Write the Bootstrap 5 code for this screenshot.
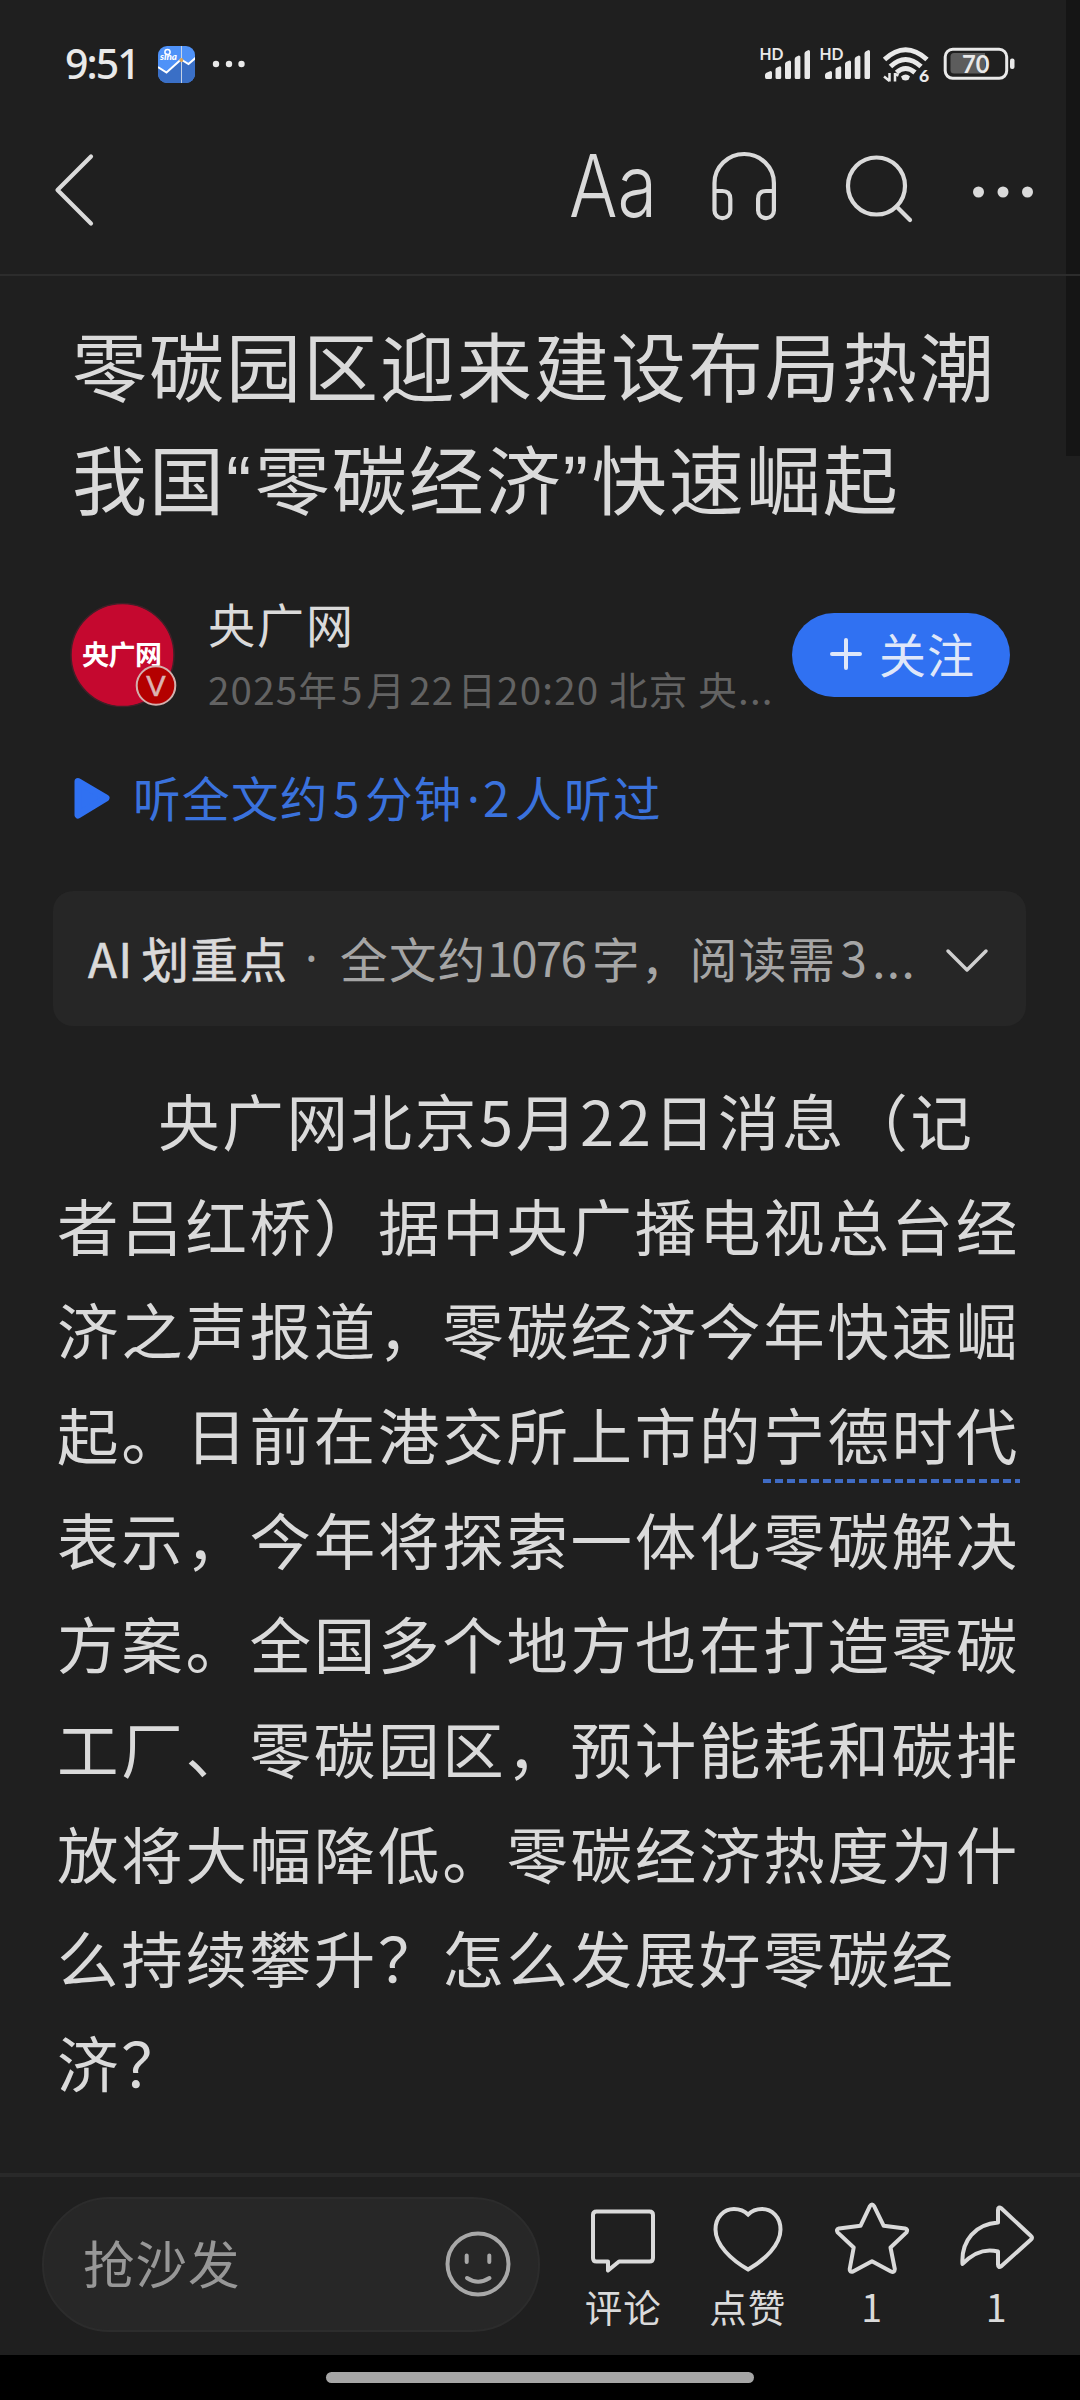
<!DOCTYPE html>
<html lang="zh-CN">
<head>
<meta charset="utf-8">
<meta name="viewport" content="width=device-width, initial-scale=1">
<title>零碳园区迎来建设布局热潮</title>
<link href="https://cdn.jsdelivr.net/npm/bootstrap@5.3.0/dist/css/bootstrap.min.css" rel="stylesheet">
<style>
  html, body { height: 2400px; overflow: hidden; }
  body { background: #1f1f1f; color: #dadada; font-family: "Noto Sans CJK SC", sans-serif; width: 1080px; line-height: 1; }
  svg { display: block; flex: none; overflow: visible; }
  .screen { height: 2400px; }
  .edge-strip { position: absolute; right: 0; top: 0; width: 14px; height: 456px; background: #151515; }
  .status { height: 128px; padding: 0 65px 0 65px; color: #e9e9e9; }
  .clock { font: 500 41px/41px "Noto Sans", sans-serif; letter-spacing: -1.9px; width: 93px; padding-bottom: 1px; }
  .toolbar { height: 148px; border-bottom: 2px solid #2c2c2c; }
  .headline { margin: 0; padding: 31px 0 0 72px; height: 280px; font-size: 75px; line-height: 113px; font-weight: 400; letter-spacing: 2px; }
  .qt { font-family: "Liberation Sans", sans-serif; font-size: 76px; line-height: 1; letter-spacing: 3.500px; }
  .byline { height: 196px; padding: 1px 70px 0 69px; }
  .who { margin-left: 29px; }
  .source { font-size: 47px; line-height: 54px; letter-spacing: 2px; margin-top: -2px; }
  .meta { font-size: 38.5px; line-height: 46px; color: #636363; letter-spacing: 1.2px; margin-top: 15px; }
  .meta .num { margin: 0 3px; }
  .follow { width: 218px; height: 84px; background: #3071f2; color: #dfe7f9; font-size: 47px; padding: 0 0 2px 37px; letter-spacing: 1px; }
  .listen { height: 92px; padding-left: 72px; color: #3a72dd; font-size: 47.5px; letter-spacing: 1.5px; }
  .num { margin: 0 4px; }
  .mid { font-family: "Noto Sans", sans-serif; line-height: 1; margin: 0 2px; }
  .listen .mid { margin: 0 2px 0 4px; }
  .brief { margin: 47px 54px 0 53px; height: 135px; border-radius: 20px; background: #262626; padding: 0 38px 0 35px; font-size: 47.5px; letter-spacing: 1.4px; }
  .brief .lead-in { -webkit-text-stroke: .6px #dadada; width: 215px; }
  .brief .dotsep { width: 37px; }
  .brief .sum { color: #a5a5a5; }
  .brief span { position: relative; top: -1px; }
  .tight { letter-spacing: -1.8px; margin-right: 7px; }
  .story { padding: 42px 0 0 57px; height: 1147px; font-size: 61.5px; line-height: 104.67px; letter-spacing: 2.7px; white-space: nowrap; margin: 0; }
  .indent { padding-left: 101px; }
  .term { color: inherit; text-decoration: none; padding-bottom: 5px; background: repeating-linear-gradient(90deg, #3f6bc4 0 8px, transparent 8px 12px) 0 100% / 100% 4px no-repeat; }
  .dock { height: 182px; border-top: 4px solid #292929; padding: 0 21px 4px 42px; }
  .reply { width: 498px; height: 135px; border: 2px solid #2c2c2c; background: #272727; color: #979797; font-size: 51.5px; letter-spacing: 1px; padding: 0 27px 0 39px; }
  .reply span { padding-bottom: 5px; }
  .acts { margin-left: 21px; padding-top: 1px; }
  .act { width: 124.5px; font-size: 37.5px; letter-spacing: 1px; }
  .act span { line-height: 40px; margin-top: 7px; }
  .gesture { height: 45px; background: #000; padding-top: 17px; }
  .gesture div { width: 428px; height: 11px; background: #a6a6a6; }
</style>
</head>
<body>
<div class="screen d-flex flex-column position-relative">
  <div class="edge-strip"></div>

  <header class="status d-flex align-items-center position-relative">
    <span class="clock">9:51</span>
    <svg width="90" height="40" viewBox="0 0 90 40">
      <defs><clipPath id="app"><rect y="2" width="37" height="37" rx="9"/></clipPath></defs>
      <g clip-path="url(#app)">
        <rect y="2" width="37" height="37" fill="#4f92f8"/>
        <path d="M0 23l8.500 5.500L23 15l7.500 5L37 14v26H0z" fill="#3a6fc6"/>
        <path d="M0 23l8.500 5.500L23 15.500l7.500 4.500L38 13.500" fill="none" stroke="#fff" stroke-width="2"/>
        <path d="M23.500 2v37" stroke="#d5dce8" stroke-width=".9"/>
        <circle cx="23.300" cy="16" r="2" fill="#dfa552"/>
      </g>
      <circle cx="9.500" cy="8" r="2.600" fill="none" stroke="#fff" stroke-width="1.500"/>
      <text x="2" y="15.500" font-family="Lato" font-size="9" font-weight="900" font-style="italic" fill="#fff" textLength="17" lengthAdjust="spacingAndGlyphs">sina</text>
      <g fill="#e9e9e9"><circle cx="58" cy="20" r="3.200"/><circle cx="71" cy="20" r="3.200"/><circle cx="83.500" cy="20" r="3.200"/></g>
    </svg>
    <svg class="ms-auto" width="256" height="40" viewBox="759 44 256 40">
      <g fill="#e9e9e9">
        <text x="759.500" y="60" font-family="Lato" font-weight="700" font-size="17" textLength="24" lengthAdjust="spacingAndGlyphs">HD</text>
        <text x="819.500" y="60" font-family="Lato" font-weight="700" font-size="17" textLength="24" lengthAdjust="spacingAndGlyphs">HD</text>
        <path id="bars" d="M765 77v-2q0-1.500 1.500-2.200l4-1.800q1.500 0 1.500 1.500v5q0 1.500-1.500 1.500h-4q-1.500 0-1.500-2zM775.500 69.500q0-1.500 1.500-2l3-1.300q1.200 0 1.200 1.500v9.800q0 1.500-1.500 1.500h-2.700q-1.500 0-1.500-1.500zM785 64q0-1.500 1.500-2.200l3-1.300q1.500 0 1.500 1.500v15.500q0 1.500-1.500 1.500h-3q-1.500 0-1.500-1.500zM794.700 59q0-1.500 1.500-2.200l2.700-1.300q1.500 0 1.500 1.500v20.500q0 1.500-1.500 1.500h-2.700q-1.500 0-1.500-1.500zM804.500 53.500q0-1.500 1.500-2.200l2.500-1.300q1.500 0 1.500 1.500v26q0 1.500-1.500 1.500h-2.500q-1.500 0-1.500-1.500z"/>
        <use href="#bars" x="60"/>
        <path d="M901 76.500q5-4 9 0l-1.500 3.200q-3 1.600-6 0z"/>
        <path d="M889.500 73v8.500M895 73v8.500M889.500 81l-5.500-4.500M895 74l3.500 1.500" stroke="#e9e9e9" stroke-width="2.500" fill="none"/>
        <text x="919" y="82" font-family="Lato" font-weight="900" font-size="17.500">6</text>
      </g>
      <g fill="none" stroke="#e9e9e9" stroke-width="5">
        <path d="M884.500 59.500q21-19.500 42.500 0M890.500 66.500q15-14 30.500 0M896.500 72.500q9-8 18.500 0"/>
      </g>
      <rect x="945.200" y="49.300" width="61.500" height="29" rx="7.500" fill="none" stroke="#e9e9e9" stroke-width="3"/>
      <path d="M954 53h31v20.500h-31q-3.500 0-3.500-3.500v-13.500q0-3.500 3.500-3.500z" fill="#5c5c5c"/>
      <rect x="1010" y="58.500" width="4.500" height="10.500" rx="2" fill="#e9e9e9"/>
      <text x="962" y="73" font-family="Lato" font-weight="700" font-size="25" fill="#e9e9e9" textLength="27.500" lengthAdjust="spacingAndGlyphs">70</text>
    </svg>
  </header>

  <nav class="toolbar position-relative">
    <svg width="1080" height="146" viewBox="0 128 1080 146" fill="none" stroke="#dadada" stroke-width="4.200" stroke-linecap="round" stroke-linejoin="round">
      <path d="M91 156.500L57.500 190 91 223.500"/>
      <text x="569" y="217" font-family="Inter" font-weight="300" font-size="86" fill="#dadada" stroke="none" textLength="88" lengthAdjust="spacingAndGlyphs">Aa</text>
      <path d="M714.500 191v-8a29.700 29 0 0 1 59.400 0v27.500a7.600 7.600 0 0 1-7.600 7.600h-.6a7.600 7.600 0 0 1-7.600-7.600V199q0-8 8-8h7.800M714.500 191h7.800q8 0 8 8v11.500a7.600 7.600 0 0 1-7.600 7.600h-.6a7.600 7.600 0 0 1-7.600-7.600V191"/>
      <circle cx="876.500" cy="186" r="28.500"/><path d="M896.500 206.500l13.500 13.500"/>
      <g fill="#dadada" stroke="none"><circle cx="978.500" cy="192" r="5.500"/><circle cx="1003" cy="192" r="5.500"/><circle cx="1027.500" cy="192" r="5.500"/></g>
    </svg>
  </nav>

  <h1 class="headline">零碳园区迎来建设布局热潮<br>我国<span class="qt">“</span>零碳经济<span class="qt">”</span>快速崛起</h1>

  <section class="byline d-flex align-items-center">
    <svg width="110" height="110" viewBox="69 599 110 110">
      <circle cx="122.500" cy="654" r="51.500" fill="#c5082f" stroke="#402028" stroke-width="1.500"/>
      <text x="82" y="664" font-family="Noto Sans CJK SC" font-weight="700" font-size="27" fill="#fff" textLength="80">央广网</text>
      <circle cx="156" cy="684.500" r="19.300" fill="#b40000" stroke="#d3b0ae" stroke-width="2"/>
      <text x="156" y="695" text-anchor="middle" font-family="Liberation Sans" font-size="29" fill="#dcb4b2" stroke="#dcb4b2" stroke-width=".6">V</text>
    </svg>
    <div class="who text-nowrap">
      <div class="source">央广网</div>
      <div class="meta">2025年<span class="num">5</span>月<span class="num">22</span>日20:20 北京 央...</div>
    </div>
    <button class="follow btn rounded-pill border-0 ms-auto d-flex align-items-center">
      <svg class="me-3" width="34" height="34" viewBox="0 0 34 34" stroke="#dfe7f9" stroke-width="4" stroke-linecap="round"><path d="M3 17h28M17 3v28"/></svg>
      <span>关注</span>
    </button>
  </section>

  <a class="listen d-flex align-items-center text-decoration-none text-nowrap">
    <svg width="37" height="42" viewBox="0 0 37 42"><path d="M6 4.500L34 21 6 38z" fill="#3071f2" stroke="#3071f2" stroke-width="7" stroke-linejoin="round"/></svg>
    <span class="ms-4">听全文约<span class="num">5</span>分钟<span class="mid">·</span><span class="num ms-0">2</span>人听过</span>
  </a>

  <section class="brief d-flex align-items-center text-nowrap">
    <span class="lead-in">AI<span class="num"></span>划重点</span>
    <span class="sum dotsep"><span class="mid">·</span></span>
    <span class="sum">全文约<span class="tight">1076</span>字，阅读需<span class="num">3</span>...</span>
    <svg class="ms-auto" width="42" height="22" viewBox="0 0 42 22" fill="none" stroke="#cfcfcf" stroke-width="3.500" stroke-linecap="round" stroke-linejoin="round"><path d="M2 3l19 19L40 3"/></svg>
  </section>

  <p class="story"><span class="indent"></span>央广网北京5月22日消息（记<br>者吕红桥）据中央广播电视总台经<br>济之声报道，零碳经济今年快速崛<br>起。日前在港交所上市的<a class="term">宁德时代</a><br>表示，今年将探索一体化零碳解决<br>方案。全国多个地方也在打造零碳<br>工厂、零碳园区，预计能耗和碳排<br>放将大幅降低。零碳经济热度为什<br>么持续攀升？怎么发展好零碳经<br>济？</p>

  <footer class="dock d-flex align-items-center">
    <div class="reply rounded-pill d-flex align-items-center justify-content-between">
      <span>抢沙发</span>
      <svg width="66" height="66" viewBox="0 0 66 66" fill="none" stroke="#a8a8a8" stroke-width="4" stroke-linecap="round"><circle cx="33" cy="33" r="30.500"/><path d="M21.700 24.500v6.500M44.300 24.500v6.500M22 47q11 7.500 22.500 0"/></svg>
    </div>
    <div class="acts d-flex text-center">
      <div class="act d-flex flex-column align-items-center">
        <svg width="80" height="76" viewBox="583 2203 80 76" fill="none" stroke="#dadada" stroke-width="4" stroke-linejoin="round"><path d="M596.500 2211.500h53q3.500 0 3.500 3.500v43q0 3.500-3.500 3.500H619l-11 9v-9h-11.500q-3.500 0-3.500-3.500v-43q0-3.500 3.500-3.500z"/></svg>
        <span>评论</span>
      </div>
      <div class="act d-flex flex-column align-items-center">
        <svg width="80" height="76" viewBox="707.500 2203 80 76" fill="none" stroke="#dadada" stroke-width="4"><path d="M747.600 2269.500C731 2260 715 2245 715 2229.500 715 2217 723.500 2209 733.500 2209q8.500 0 14.100 5.500Q753 2209 761.500 2209c10 0 18.500 8 18.500 20.500 0 15.500-15.800 30.500-32.400 40z"/></svg>
        <span>点赞</span>
      </div>
      <div class="act d-flex flex-column align-items-center">
        <svg width="80" height="76" viewBox="832 2203 80 76" fill="none" stroke="#dadada" stroke-width="4" stroke-linejoin="round"><path d="M869.800 2206.300q2.200-3.500 4.400 0L883.700 2225.800l21.300 2.600q3.500 1 1.500 4L890.500 2247.500l4.300 21.500q-.3 4-3.800 2.500L872 2261.200l-19 10.300q-3.500 1-3.300-2.500l4-21.500L837.600 2232.400q-2-3 1.500-4L860.500 2225.800z"/></svg>
        <span>1</span>
      </div>
      <div class="act d-flex flex-column align-items-center">
        <svg width="80" height="76" viewBox="957 2203 80 76" fill="none" stroke="#dadada" stroke-width="4" stroke-linejoin="round"><path d="M998 2222.500V2210q0-4 3.500-1.500L1031 2236q2 1.700 0 3.500L1001.500 2266q-3.500 2.500-3.500-1.500V2251.500Q979 2246.500 962.500 2264C961 2240 976 2224 998 2222.500z"/></svg>
        <span>1</span>
      </div>
    </div>
  </footer>
  <div class="gesture d-flex justify-content-center"><div class="rounded-pill"></div></div>
</div>
<script src="https://cdn.jsdelivr.net/npm/bootstrap@5.3.0/dist/js/bootstrap.bundle.min.js"></script>
</body>
</html>
